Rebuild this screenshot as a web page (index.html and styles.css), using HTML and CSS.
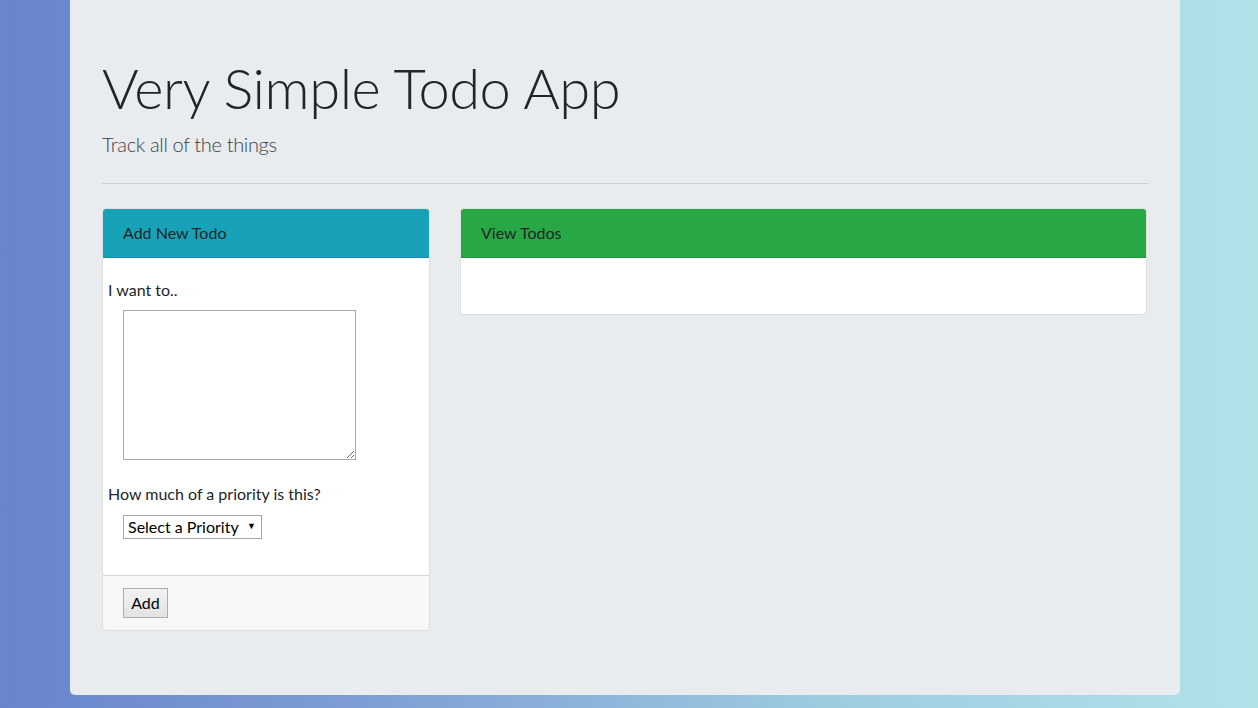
FILE: index.html
```html
<!DOCTYPE html>
<html lang="en">
<head>
<meta charset="utf-8">
<title>Very Simple Todo App</title>
<link rel="stylesheet" href="styles.css">
</head>
<body>
<div class="page">
  <div class="jumbotron">
    <h1 class="title">Very Simple Todo App</h1>
    <p class="lead">Track all of the things</p>
    <hr class="divider">
    <div class="row">
      <div class="card">
        <div class="card-header header-info">Add New Todo</div>
        <div class="card-body add-body">
          <label class="field-label" for="todo">I want to..</label>
          <textarea id="todo" class="todo-text"></textarea>
          <label class="field-label second" for="prio">How much of a priority is this?</label>
          <div class="select-wrap">
            <select id="prio" class="prio-select">
              <option>Select a Priority</option>
            </select>
            <span class="select-arrow">&#9660;</span>
          </div>
        </div>
        <div class="card-footer">
          <button class="add-btn" type="button">Add</button>
        </div>
      </div>
      <div class="card card-view">
        <div class="card-header header-success">View Todos</div>
        <div class="card-body view-body"></div>
      </div>
    </div>
  </div>
</div>
</body>
</html>
```

FILE: styles.css
```css
html, body {
  margin: 0;
  padding: 0;
  height: 100%;
}
body {
  background: linear-gradient(to right, #6784cd 0%, #7e9fd4 30%, #9ccbe0 65%, #b0e3e8 100%);
  font-family: "Lato", "Open Sans", sans-serif;
  font-size: 16px;
  color: #212529;
  overflow: hidden;
}
.page {
  padding-left: 70px;
}
.jumbotron {
  width: 1110px;
  box-sizing: border-box;
  background: #e9ecef;
  padding: 54px 32px 64px 32px;
  border-radius: 0 0 5px 5px;
}
.title {
  margin: 0 0 8px 0;
  font-size: 56px;
  line-height: 67px;
  font-weight: 300;
  letter-spacing: -0.45px;
  color: #212529;
}
.lead {
  margin: 0;
  font-size: 20px;
  line-height: 30px;
  font-weight: 300;
  letter-spacing: -0.35px;
  color: #3a3f45;
}
.divider {
  margin: 24px 0 0 0;
  border: 0;
  border-top: 1px solid rgba(0,0,0,0.12);
  height: 0;
}
.row {
  margin-top: 24px;
  display: grid;
  grid-template-columns: 328px 687px;
  gap: 30px;
  align-items: start;
}
.card {
  background: #fff;
  border: 1px solid rgba(0,0,0,0.125);
  border-radius: 4px;
  overflow: hidden;
  display: flex;
  flex-direction: column;
}
.card-header {
  padding: 12px 20px;
  line-height: 24px;
  border-bottom: 1px solid rgba(0,0,0,0.125);
  color: #212529;
}
.header-info { background: #17a2b8; }
.header-success { background: #28a745; }
.card-body {
  display: flex;
  flex-direction: column;
  align-items: flex-start;
}
.add-body {
  padding: 20px 0 36px 0;
}
.field-label {
  margin-left: 5px;
  line-height: 24px;
}
.field-label.second {
  margin-top: 22px;
}
.todo-text {
  margin: 8px 0 0 20px;
  width: 233px;
  height: 150px;
  box-sizing: border-box;
  border: 1px solid #a9a9a9;
  border-radius: 0;
  padding: 2px;
  font-family: "Liberation Mono", monospace;
}
.select-wrap {
  position: relative;
  margin: 9px 0 0 20px;
}
.prio-select {
  appearance: none;
  -webkit-appearance: none;
  width: 139px;
  height: 24px;
  box-sizing: border-box;
  border: 1px solid #a6a6a6;
  border-radius: 0;
  background: #fff;
  padding: 0 0 2px 4px;
  font-family: "Lato", "Open Sans", sans-serif;
  font-size: 16px;
  color: #000;
}
.select-arrow {
  position: absolute;
  right: 6px;
  top: 6px;
  font-size: 9px;
  line-height: 10px;
  color: #000;
  pointer-events: none;
}
.card-footer {
  padding: 12px 20px;
  background: #f7f7f7;
  border-top: 1px solid rgba(0,0,0,0.125);
}
.add-btn {
  display: block;
  width: 45px;
  height: 30px;
  padding: 0 0 1px 0;
  border: 1px solid #adadad;
  border-radius: 0;
  background: linear-gradient(#f2f2f2, #e3e3e3);
  font-family: "Lato", "Open Sans", sans-serif;
  font-size: 16px;
  color: #000;
}
.view-body {
  height: 56px;
}
```
